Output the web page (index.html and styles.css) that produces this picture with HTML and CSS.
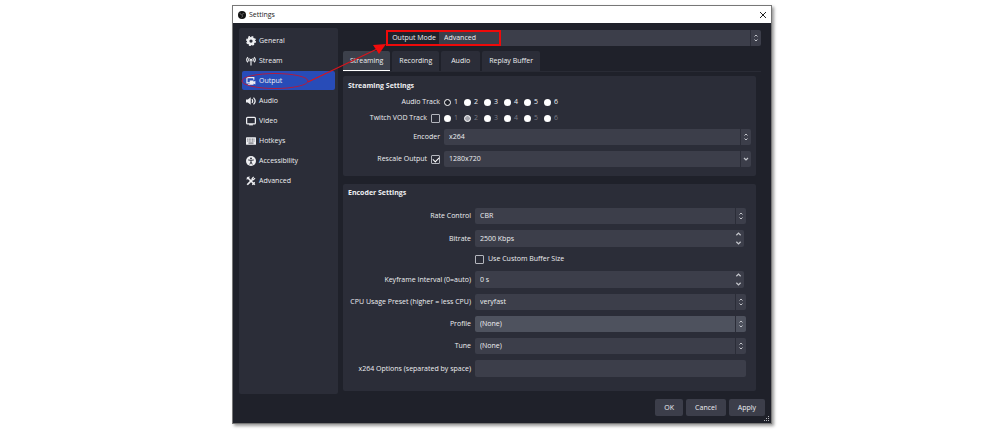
FILE: index.html
```html
<!DOCTYPE html>
<html lang="en">
<head>
<meta charset="utf-8">
<title>Settings</title>
<link rel="stylesheet" href="styles.css">
</head>
<body>
<svg class="defs" aria-hidden="true">
  <symbol id="updown" viewBox="0 0 6 10"><path d="M1.500 3.500 3 2 4.500 3.500M1.500 6.500 3 8 4.500 6.500" fill="none" stroke="currentColor" stroke-width="1"/></symbol>
  <symbol id="spin" viewBox="0 0 6 14"><path d="M1 4 3 2 5 4M1 10 3 12 5 10" fill="none" stroke="currentColor" stroke-width="1.2"/></symbol>
  <symbol id="down" viewBox="0 0 6 10"><path d="M1 4 3 6 5 4" fill="none" stroke="currentColor" stroke-width="1.2"/></symbol>
</svg>
<main class="window">
  <header class="titlebar">
    <svg class="logo" viewBox="0 0 16 16"><circle cx="8" cy="8" r="8" fill="#111"/><path d="M4 3.4c0 2.5 1.4 4 3.7 4.3M12.5 5.4C10.2 4.600 8.600 5.600 8 7.800M7 13.200c2-1.200 2.500-3.200 1.200-5.200" fill="none" stroke="#8a8a8a" stroke-width="1.300"/></svg>
    <h1 class="title">Settings</h1>
    <button class="close" type="button" aria-label="Close"><svg viewBox="0 0 8 8"><path d="M1 1 7 7M7 1 1 7" stroke="#222" stroke-width="1"/></svg></button>
  </header>
  <div class="body">
    <nav class="sidebar">
      <a class="item" href="#general"><svg viewBox="0 0 16 16"><circle cx="8" cy="8" r="4.600" fill="none" stroke="currentColor" stroke-width="4"/><circle cx="8" cy="8" r="6.800" fill="none" stroke="currentColor" stroke-width="2.400" stroke-dasharray="3 2.340"/></svg>General</a>
      <a class="item" href="#stream"><svg viewBox="0 0 16 16"><path d="M3 2C.6 4.500.6 7.500 3 10M13 2c2.400 2.500 2.400 5.500 0 8M5.300 3.500c-1.300 1.600-1.300 3.400 0 5M10.700 3.500c1.300 1.600 1.300 3.400 0 5M8 6v9" fill="none" stroke="currentColor" stroke-width="1.800"/><circle cx="8" cy="6" r="1.800" fill="currentColor"/></svg>Stream</a>
      <a class="item active" href="#output"><svg viewBox="0 0 16 16"><path d="M7 11H1.500V2.500h11V6" fill="none" stroke="currentColor" stroke-width="1.800"/><path d="M6 7h6v2l3-1.500v6L12 12v2H6zM3 13h3v2H3z" fill="currentColor"/></svg>Output</a>
      <a class="item" href="#audio"><svg viewBox="0 0 16 16"><path d="M0 5.500h3L7.500 2v12L3 10.500H0z" fill="currentColor"/><path d="M9.500 5c1.500 2 1.500 4 0 6M12 2.500c3.400 3.500 3.400 7.500 0 11" fill="none" stroke="currentColor" stroke-width="2"/></svg>Audio</a>
      <a class="item" href="#video"><svg viewBox="0 0 16 16"><rect x="1" y="2" width="14" height="10.500" rx="1.500" fill="none" stroke="currentColor" stroke-width="2"/><path d="M5 13h6v2H5z" fill="currentColor"/></svg>Video</a>
      <a class="item" href="#hotkeys"><svg viewBox="0 0 16 16"><rect y="2" width="16" height="12" rx="1" fill="currentColor"/><path d="M2 5h12M2 8h12" stroke="#2b2d38" stroke-width="1.300" stroke-dasharray="1.500 1"/><path d="M4 11.300h8" stroke="#2b2d38" stroke-width="1.300"/></svg>Hotkeys</a>
      <a class="item" href="#accessibility"><svg viewBox="0 0 16 16"><circle cx="8" cy="8" r="8" fill="currentColor"/><circle cx="8" cy="3.800" r="1.500" fill="#2b2d38"/><path d="M3.500 6.300 8 7l4.500-.7M8 7v2.500L6 13.500M8 9.500l2 4" fill="none" stroke="#2b2d38" stroke-width="1.500"/></svg>Accessibility</a>
      <a class="item" href="#advanced"><svg viewBox="0 0 16 16"><path d="M2 2 14 14M2 14l9-9" stroke="currentColor" stroke-width="2.800"/><path d="M14.500 3.500 12 6 9.800 4 12.300 1.300M1 5.500 5.500 1M10 14l4-4" fill="none" stroke="currentColor" stroke-width="1.800"/></svg>Advanced</a>
    </nav>
    <section class="content">
      <div class="mode">
        <label for="mode">Output Mode</label>
        <div class="combo"><select id="mode"><option>Advanced</option><option>Simple</option></select><svg class="arrow"><use href="#updown"/></svg></div>
      </div>
      <div class="tabs" role="tablist">
        <button class="tab selected" type="button" role="tab" aria-selected="true">Streaming</button>
        <button class="tab" type="button" role="tab">Recording</button>
        <button class="tab" type="button" role="tab">Audio</button>
        <button class="tab" type="button" role="tab">Replay Buffer</button>
      </div>
      <section class="group streaming">
        <h2>Streaming Settings</h2>
        <div class="row tracks" role="radiogroup" aria-labelledby="track">
          <span class="label" id="track">Audio Track</span>
          <div class="radios">
            <label><input type="radio" name="track" checked>1</label><label><input type="radio" name="track">2</label><label><input type="radio" name="track">3</label><label><input type="radio" name="track">4</label><label><input type="radio" name="track">5</label><label><input type="radio" name="track">6</label>
          </div>
        </div>
        <div class="row tracks">
          <label class="label">Twitch VOD Track<input type="checkbox"></label>
          <div class="radios">
            <label><input type="radio" name="vod" disabled>1</label><label><input type="radio" name="vod" disabled checked>2</label><label><input type="radio" name="vod" disabled>3</label><label><input type="radio" name="vod" disabled>4</label><label><input type="radio" name="vod" disabled>5</label><label><input type="radio" name="vod" disabled>6</label>
          </div>
        </div>
        <div class="row">
          <label class="label" for="encoder">Encoder</label>
          <div class="combo"><select id="encoder"><option>x264</option></select><svg class="arrow"><use href="#updown"/></svg></div>
        </div>
        <div class="row">
          <label class="label">Rescale Output<input type="checkbox" checked></label>
          <div class="combo"><select aria-label="Rescale resolution"><option>1280x720</option></select><svg class="arrow"><use href="#down"/></svg></div>
        </div>
      </section>
      <section class="group encoder">
        <h2>Encoder Settings</h2>
        <div class="row">
          <label class="label" for="rate">Rate Control</label>
          <div class="combo"><select id="rate"><option>CBR</option></select><svg class="arrow"><use href="#updown"/></svg></div>
        </div>
        <div class="row">
          <label class="label" for="bitrate">Bitrate</label>
          <div class="spin"><input id="bitrate" type="text" value="2500 Kbps"><svg class="arrow"><use href="#spin"/></svg></div>
        </div>
        <div class="row">
          <span></span>
          <label class="check"><input type="checkbox">Use Custom Buffer Size</label>
        </div>
        <div class="row">
          <label class="label" for="keyframe">Keyframe Interval (0=auto)</label>
          <div class="spin"><input id="keyframe" type="text" value="0 s"><svg class="arrow"><use href="#spin"/></svg></div>
        </div>
        <div class="row">
          <label class="label" for="preset">CPU Usage Preset (higher = less CPU)</label>
          <div class="combo"><select id="preset"><option>veryfast</option></select><svg class="arrow"><use href="#updown"/></svg></div>
        </div>
        <div class="row">
          <label class="label" for="profile">Profile</label>
          <div class="combo hover"><select id="profile"><option>(None)</option></select><svg class="arrow"><use href="#updown"/></svg></div>
        </div>
        <div class="row">
          <label class="label" for="tune">Tune</label>
          <div class="combo"><select id="tune"><option>(None)</option></select><svg class="arrow"><use href="#updown"/></svg></div>
        </div>
        <div class="row">
          <label class="label" for="options">x264 Options (separated by space)</label>
          <input class="text" id="options" type="text">
        </div>
      </section>
    </section>
  </div>
  <footer class="footer">
    <button class="btn" type="button">OK</button>
    <button class="btn" type="button">Cancel</button>
    <button class="btn" type="button">Apply</button>
  </footer>
  <svg class="grip" viewBox="0 0 6 6"><path d="M4 0h1v1H4zM2 2h1v1H2zM4 2h1v1H4zM0 4h1v1H0zM2 4h1v1H2zM4 4h1v1H4z" fill="#b5b6bb"/></svg>
  <svg class="annotation" viewBox="0 0 538 417" aria-hidden="true">
    <g fill="none" stroke="#d8141c">
      <ellipse cx="42" cy="75" rx="33" ry="7.500" stroke="#b01c40"/>
      <path d="M75 76 144 43" stroke-width="1.200"/>
      <rect x="154" y="25" width="113" height="14" stroke="#ee0a0a" stroke-width="2"/>
    </g>
    <path d="M153 38 140 39 146 48z" fill="#f00c0c"/>
  </svg>
</main>
</body>
</html>
```
FILE: styles.css
```css
* { box-sizing: border-box; }

body {
  margin: 0;
  padding: 6px 229px 7px 233px;
  background: #fff;
  color: #eeeff2;
  font: 7px/10px "Open Sans", "Noto Sans", sans-serif;
}

.defs { display: none; }

button, input, select {
  margin: 0;
  border: 0;
  color: inherit;
  font: inherit;
}

.window {
  position: relative;
  background: #1f212a;
  box-shadow: 0 0 0 1px #777, 2px 2px 3px 1px #999;
}

.titlebar {
  display: flex;
  align-items: center;
  gap: 3px;
  height: 17px;
  padding: 0 4px 0 5px;
  background: #fff;
  color: #222;
}

.logo { width: 8px; height: 8px; }

.title {
  flex: 1;
  margin: 0;
  font-size: 7px;
  font-weight: 400;
}

.close {
  width: 8px;
  height: 8px;
  padding: 0;
  background: none;
}

.close svg { display: block; }

.body {
  display: flex;
  gap: 5px;
  padding: 5px 10px 0 6px;
}

.sidebar {
  display: flex;
  flex: 0 0 99px;
  flex-direction: column;
  gap: 1px;
  margin-bottom: -3px;
  padding: 3px;
  border-radius: 2px;
  background: #2b2d38;
}

.item {
  display: flex;
  align-items: center;
  gap: 3px;
  height: 19px;
  padding-left: 4px;
  border-radius: 2px;
  color: inherit;
  text-decoration: none;
}

.item svg { width: 10px; height: 10px; }

.item.active { background: #284cb8; }

.content {
  flex: 1;
  min-width: 0;
}

.mode {
  display: grid;
  grid-template-columns: 93px 1fr;
  gap: 3px;
  align-items: center;
  padding-top: 2px;
  text-align: right;
}

.combo, .spin {
  position: relative;
  display: flex;
  height: 16px;
}

.combo select, .spin input, .text {
  flex: 1;
  width: 100%;
  min-width: 0;
  padding: 0 5px;
  border-radius: 2px;
  appearance: none;
  background: #3c3e4a;
}

.arrow {
  position: absolute;
  top: 0;
  right: 0;
  width: 11px;
  height: 100%;
  padding: 3px 2px;
  border-left: 1px solid #2b2d38;
  color: #c3c5cb;
  pointer-events: none;
}

.spin { height: 17px; margin-right: 2px; }

.spin .arrow { padding: 1px 2px; border-left: 0; }

.combo.hover select { background: #4e525e; }

.tabs {
  display: flex;
  gap: 2px;
  margin-top: 5px;
  border-bottom: 1px solid #292b35;
}

.tab {
  height: 20px;
  padding: 0 7px;
  border-bottom: 1px solid transparent;
  border-radius: 2px 2px 0 0;
  background: #2b2d38;
}

.tab:nth-child(3) { padding: 0 10px; }

.tab.selected {
  border-color: #fff;
  background: #3c404b;
}

.group {
  margin-right: 5px;
  padding: 5px;
  border-radius: 2px;
  background: #2b2d38;
}

.group h2 {
  margin: 0;
  font-size: 7px;
  font-weight: 700;
}

.row {
  display: grid;
  align-items: center;
}

.label {
  display: flex;
  gap: 4px;
  align-items: center;
  justify-content: flex-end;
  white-space: nowrap;
}

.streaming {
  display: grid;
  gap: 6px;
  margin-top: 4px;
  padding-bottom: 9px;
}

.streaming .row {
  grid-template-columns: 92px 1fr;
  gap: 4px;
}

.streaming .tracks { height: 10px; }

.radios {
  display: grid;
  grid-template-columns: repeat(6, 20px);
}

.radios label, .check {
  display: flex;
  gap: 4px;
  align-items: center;
}

.radios label { gap: 3px; }

input[type="radio"] {
  width: 7px;
  height: 7px;
  border-radius: 50%;
  appearance: none;
  background: #fff;
}

input[type="radio"]:checked {
  border: 1px solid #fff;
  background: #1f212a;
}

input[type="radio"]:disabled:checked { background: #a4a6ad; }

.radios label:has(:disabled) { color: #777984; }

input[type="checkbox"] {
  display: grid;
  place-items: center;
  width: 9px;
  height: 9px;
  border: 1px solid #b4b6bd;
  border-radius: 1px;
  appearance: none;
}

input[type="checkbox"]:checked::before {
  width: 5px;
  height: 3px;
  border-bottom: 1px solid #fff;
  border-left: 1px solid #fff;
  content: "";
  transform: rotate(-45deg);
}

.encoder {
  display: grid;
  gap: 6px;
  margin-top: 8px;
  padding: 4px 10px 14px 5px;
}

.encoder h2 { margin-bottom: 4px; }

.encoder .row {
  grid-template-columns: 123px 1fr;
  gap: 4px;
}

.check { height: 12px; }

.text { height: 17px; }

.footer {
  display: flex;
  gap: 3px;
  justify-content: flex-end;
  padding: 8px 6px 7px;
}

.btn {
  height: 17px;
  padding: 0 9px;
  border-radius: 2px;
  background: #3c3e4a;
}

.grip {
  position: absolute;
  right: 1px;
  bottom: 1px;
  width: 6px;
  height: 6px;
}

.annotation {
  position: absolute;
  top: 0;
  left: 0;
  width: 538px;
  height: 417px;
  pointer-events: none;
}
```
